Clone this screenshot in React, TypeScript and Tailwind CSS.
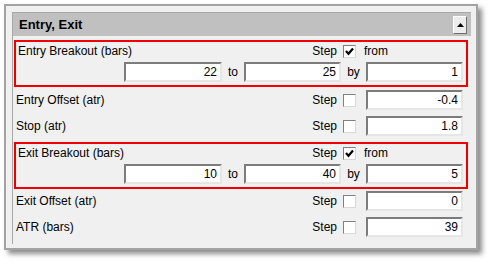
const FONT = { fontFamily: '"Liberation Sans", Arial, sans-serif' };

type Row =
  | { kind: "range"; label: string; from: string; to: string; by: string; gap: string }
  | { kind: "single"; label: string; value: string; gap: string };

const ROWS: Row[] = [
  { kind: "range", label: "Entry Breakout (bars)", from: "22", to: "25", by: "1", gap: "mt-[4px]" },
  { kind: "single", label: "Entry Offset (atr)", value: "-0.4", gap: "mt-[3px]" },
  { kind: "single", label: "Stop (atr)", value: "1.8", gap: "mt-[6px]" },
  { kind: "range", label: "Exit Breakout (bars)", from: "10", to: "40", by: "5", gap: "mt-[6px]" },
  { kind: "single", label: "Exit Offset (atr)", value: "0", gap: "mt-[2px]" },
  { kind: "single", label: "ATR (bars)", value: "39", gap: "mt-[6px]" },
];

function Field({ value, w }: { value: string; w: string }) {
  return (
    <div
      className={`${w} flex h-[20px] items-center justify-end border-2 border-t-[#7c7c7c] border-l-[#7c7c7c] border-r-[#e6e6e6] border-b-[#e6e6e6] bg-white pr-[3px] text-[12px] text-black`}
    >
      {value}
    </div>
  );
}

function Check({ on }: { on: boolean }) {
  return (
    <div className="flex h-[13px] w-[13px] items-center justify-center border border-t-[#808080] border-l-[#808080] border-r-[#d8d8d8] border-b-[#d8d8d8] bg-white">
      {on && (
        <svg width="9" height="9" viewBox="0 0 9 9">
          <path d="M1 4 L3.5 6.8 L8 1.5" fill="none" stroke="#000" strokeWidth="2.2" />
        </svg>
      )}
    </div>
  );
}

function StepBox({ on }: { on: boolean }) {
  return (
    <div className="flex items-center">
      <span className="mr-[6px] text-[12px]">Step</span>
      <Check on={on} />
    </div>
  );
}

export default function App() {
  return (
    <div className="h-[261px] w-[488px] bg-white pl-[4px] pt-[4px] text-black" style={FONT}>
      <div className="h-[246px] w-[474px] border-2 border-[#a3a3a3] bg-[#f0f0f0] pl-[6px] pr-[5px] pt-[6px] shadow-[4px_4px_5px_rgba(0,0,0,0.45)]">
        <div className="h-[232px] border-l border-t border-[#a8a8a8]">
          <div className="flex h-[23px] items-center justify-between bg-[#c0c0c0] pl-[6px] pr-[4px]">
            <span className="text-[13px] font-bold">Entry, Exit</span>
            <div className="flex h-[18px] w-[14px] items-center justify-center border border-t-white border-l-white border-r-[#6e6e6e] border-b-[#6e6e6e] bg-[#ececec]">
              <svg width="7" height="4" viewBox="0 0 7 4">
                <path d="M0 4 L3.5 0 L7 4 Z" fill="#000" />
              </svg>
            </div>
          </div>

          {ROWS.map((row) =>
            row.kind === "range" ? (
              <div
                key={row.label}
                className={`${row.gap} ml-[1px] w-[454px] border-2 border-[#ee0000] pb-[3px] pr-[3px]`}
              >
                <div className="flex h-[18px] items-center justify-between pl-[2px]">
                  <span className="text-[12px]">{row.label}</span>
                  <div className="flex items-center">
                    <StepBox on />
                    <span className="ml-[8px] w-[99px] text-[12px]">from</span>
                  </div>
                </div>
                <div className="mt-[2px] flex items-center justify-end">
                  <Field value={row.from} w="w-[98px]" />
                  <span className="w-[22px] text-center text-[12px]">to</span>
                  <Field value={row.to} w="w-[97px]" />
                  <span className="w-[25px] text-center text-[12px]">by</span>
                  <Field value={row.by} w="w-[97px]" />
                </div>
              </div>
            ) : (
              <div
                key={row.label}
                className={`${row.gap} ml-[1px] flex h-[20px] w-[454px] items-center justify-between px-[2px] pr-[5px]`}
              >
                <span className="text-[12px]">{row.label}</span>
                <div className="flex items-center">
                  <StepBox on={false} />
                  <div className="ml-[10px]">
                    <Field value={row.value} w="w-[97px]" />
                  </div>
                </div>
              </div>
            )
          )}
        </div>
      </div>
    </div>
  );
}
